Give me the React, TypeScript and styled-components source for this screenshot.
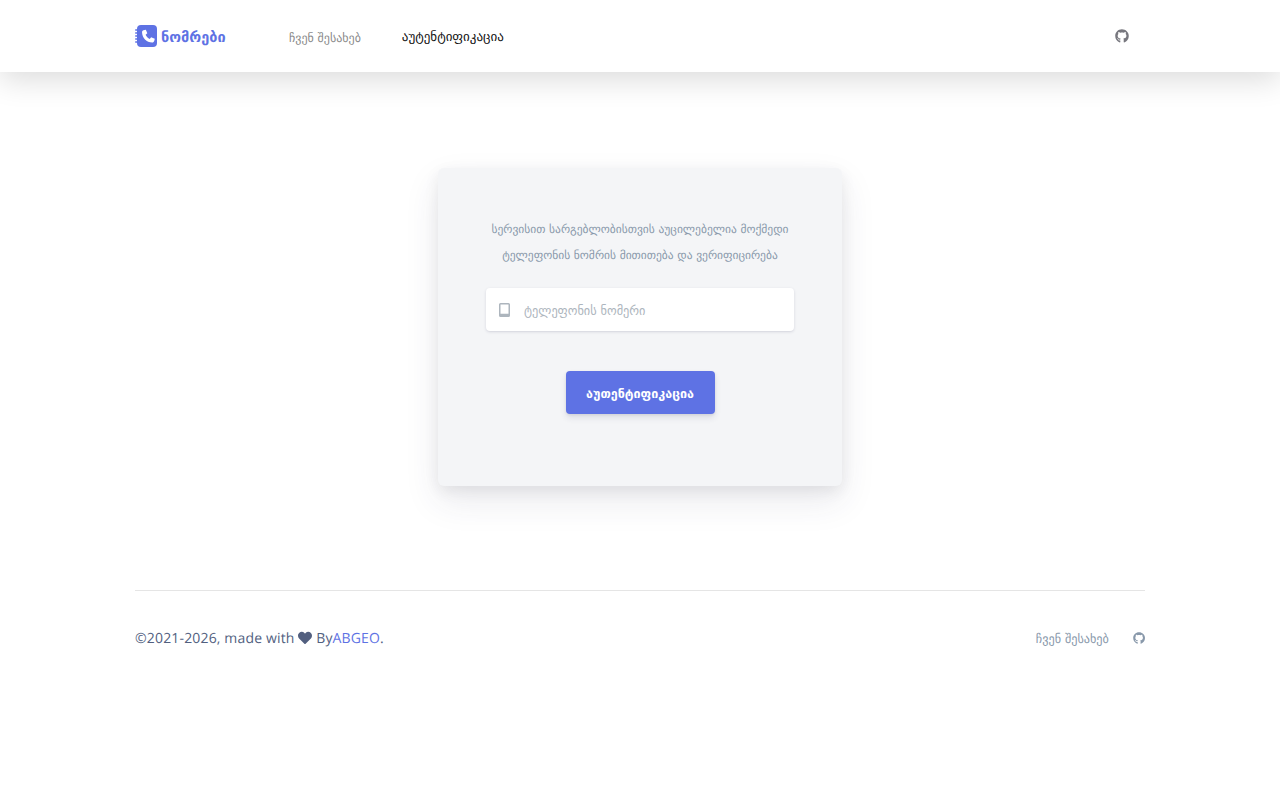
import React from "react";
import styled, { createGlobalStyle } from "styled-components";
import { FaGithub, FaHeart } from "react-icons/fa";

const GlobalStyle = createGlobalStyle`
  * {
    box-sizing: border-box;
  }

  body {
    margin: 0;
    background: #fff;
    color: #525f7f;
    font-family: "Open Sans", "DejaVu Sans", sans-serif;
    font-size: 16px;
    text-rendering: geometricPrecision;
    -webkit-font-smoothing: antialiased;
  }
`;

const Logo = () => (
  <LogoLink>
    <svg width="22" height="22" viewBox="0 0 22 22" aria-hidden="true">
      <rect x="2" y="0" width="20" height="22" rx="4" fill="#5e72e4" />
      <path
        d="M.7 5h3M.7 8h3M.7 11h3M.7 14h3M.7 17h3"
        stroke="#5e72e4"
        strokeWidth="1.4"
        strokeLinecap="round"
        fill="none"
      />
      <path
        transform="translate(-.9 .2) scale(1.15)"
        d="M8.2 4.4l2-.5 1.300 3.200-1.500 1.200c.7 1.600 2 2.900 3.600 3.600l1.200-1.500 3.200 1.300-.5 2c-.2.8-.9 1.300-1.700 1.300C10.800 15 7 11.200 6.900 6.100c0-.8.500-1.500 1.300-1.700z"
        fill="#fff"
      />
    </svg>
    <span>ნომრები</span>
  </LogoLink>
);

const TabletIcon = () => (
  <svg width="11" height="14" viewBox="0 0 11 14" aria-hidden="true">
    <path
      fillRule="evenodd"
      d="M1.500 0h8A1.500 1.500 0 0 1 11 1.500v11A1.500 1.500 0 0 1 9.500 14h-8A1.500 1.500 0 0 1 0 12.500v-11A1.500 1.500 0 0 1 1.500 0zM1.500 1.500v9.200h8V1.500z"
      fill="currentColor"
    />
  </svg>
);

export default function App() {
  return (
    <>
      <GlobalStyle />
      <Navbar>
        <Container>
          <Logo />
          <NavLinks>
            <NavLink>ჩვენ შესახებ</NavLink>
            <NavLink $active>აუტენტიფიკაცია</NavLink>
          </NavLinks>
          <NavIcon>
            <FaGithub />
          </NavIcon>
        </Container>
      </Navbar>

      <Main>
        <Card>
          <Intro>
            სერვისით სარგებლობისთვის აუცილებელია მოქმედი
            <br />
            ტელეფონის ნომრის მითითება და ვერიფიცირება
          </Intro>
          <InputGroup>
            <InputIcon>
              <TabletIcon />
            </InputIcon>
            <PhoneInput placeholder="ტელეფონის ნომერი" />
          </InputGroup>
          <SubmitButton type="button">აუთენტიფიკაცია</SubmitButton>
        </Card>
      </Main>

      <Footer>
        <Divider />
        <FooterRow>
          <Copyright>
            ©2021-2026, made with <FaHeart /> By<a href="#abgeo">ABGEO</a>.
          </Copyright>
          <FooterLinks>
            <FooterLink>ჩვენ შესახებ</FooterLink>
            <FooterLink>
              <FaGithub />
            </FooterLink>
          </FooterLinks>
        </FooterRow>
      </Footer>
    </>
  );
}

const Navbar = styled.nav`
  height: 72px;
  background: #fff;
  box-shadow: 0 8px 30px rgba(0, 0, 0, 0.14);
`;

const Container = styled.div`
  display: flex;
  align-items: center;
  width: 1010px;
  height: 100%;
  margin: 0 auto;
`;

const LogoLink = styled.a`
  display: flex;
  align-items: center;
  gap: 4px;
  width: 154px;
  color: #5e72e4;
  font-family: "DejaVu Sans", sans-serif;
  font-size: 14.5px;
  font-weight: 700;

  span {
    padding-top: 4px;
  }
`;

const NavLinks = styled.div`
  display: flex;
  gap: 41px;
  flex: 1;
  padding-top: 3px;
`;

const NavLink = styled.a<{ $active?: boolean }>`
  color: ${(p) => (p.$active ? "#111" : "#8a8a8a")};
  font-family: "DejaVu Sans", sans-serif;
  font-size: ${(p) => (p.$active ? "13px" : "12px")};
  line-height: 18px;
`;

const NavIcon = styled.a`
  display: flex;
  margin-right: 16px;
  color: #77777e;
  font-size: 14px;
`;

const Main = styled.main`
  display: flex;
  justify-content: center;
  padding-top: 96px;
`;

const Card = styled.section`
  display: flex;
  flex-direction: column;
  align-items: center;
  width: 404px;
  height: 318px;
  padding: 48px;
  border-radius: 6px;
  background: #f4f5f7;
  box-shadow: 0 15px 35px rgba(50, 50, 93, 0.1), 0 5px 15px rgba(0, 0, 0, 0.07);
`;

const Intro = styled.p`
  margin: 0 0 20px;
  color: #8898aa;
  font-family: "DejaVu Sans", sans-serif;
  font-size: 11.5px;
  line-height: 26px;
  text-align: center;
  white-space: nowrap;
`;

const InputGroup = styled.label`
  display: flex;
  align-items: center;
  width: 308px;
  height: 43px;
  border-radius: 4px;
  background: #fff;
  box-shadow: 0 1px 3px rgba(50, 50, 93, 0.15), 0 1px 0 rgba(0, 0, 0, 0.02);
`;

const InputIcon = styled.span`
  display: flex;
  width: 38px;
  padding-left: 13px;
  color: #adb5bd;
`;

const PhoneInput = styled.input`
  flex: 1;
  min-width: 0;
  padding: 3px 0 0;
  border: 0;
  outline: 0;
  background: transparent;
  color: #525f7f;
  font-family: "DejaVu Sans", sans-serif;
  font-size: 12.3px;

  &::placeholder {
    color: #adb5bd;
    opacity: 1;
  }
`;

const SubmitButton = styled.button`
  width: 149px;
  height: 43px;
  margin-top: 40px;
  padding: 2px 0 0;
  border: 0;
  border-radius: 4px;
  background: #5e72e4;
  box-shadow: 0 4px 6px rgba(50, 50, 93, 0.11), 0 1px 3px rgba(0, 0, 0, 0.08);
  color: #fff;
  font-family: "DejaVu Sans", sans-serif;
  font-size: 12.5px;
  font-weight: 600;
`;

const Footer = styled.footer`
  width: 1010px;
  margin: 104px auto 0;
`;

const Divider = styled.hr`
  margin: 0;
  border: 0;
  border-top: 1px solid rgba(0, 0, 0, 0.1);
`;

const FooterRow = styled.div`
  display: flex;
  justify-content: space-between;
  align-items: center;
  padding-top: 36px;
`;

const Copyright = styled.div`
  padding-top: 1px;
  color: #525f7f;
  font-size: 14px;
  line-height: 21px;
  letter-spacing: 0.16px;

  svg {
    vertical-align: -2px;
  }

  a {
    color: #5e72e4;
    text-decoration: none;
  }
`;

const FooterLinks = styled.div`
  display: flex;
  align-items: center;
  gap: 24px;
  padding-top: 1px;
`;

const FooterLink = styled.a`
  display: flex;
  color: #8898aa;
  font-family: "DejaVu Sans", sans-serif;
  font-size: 12.2px;
`;
